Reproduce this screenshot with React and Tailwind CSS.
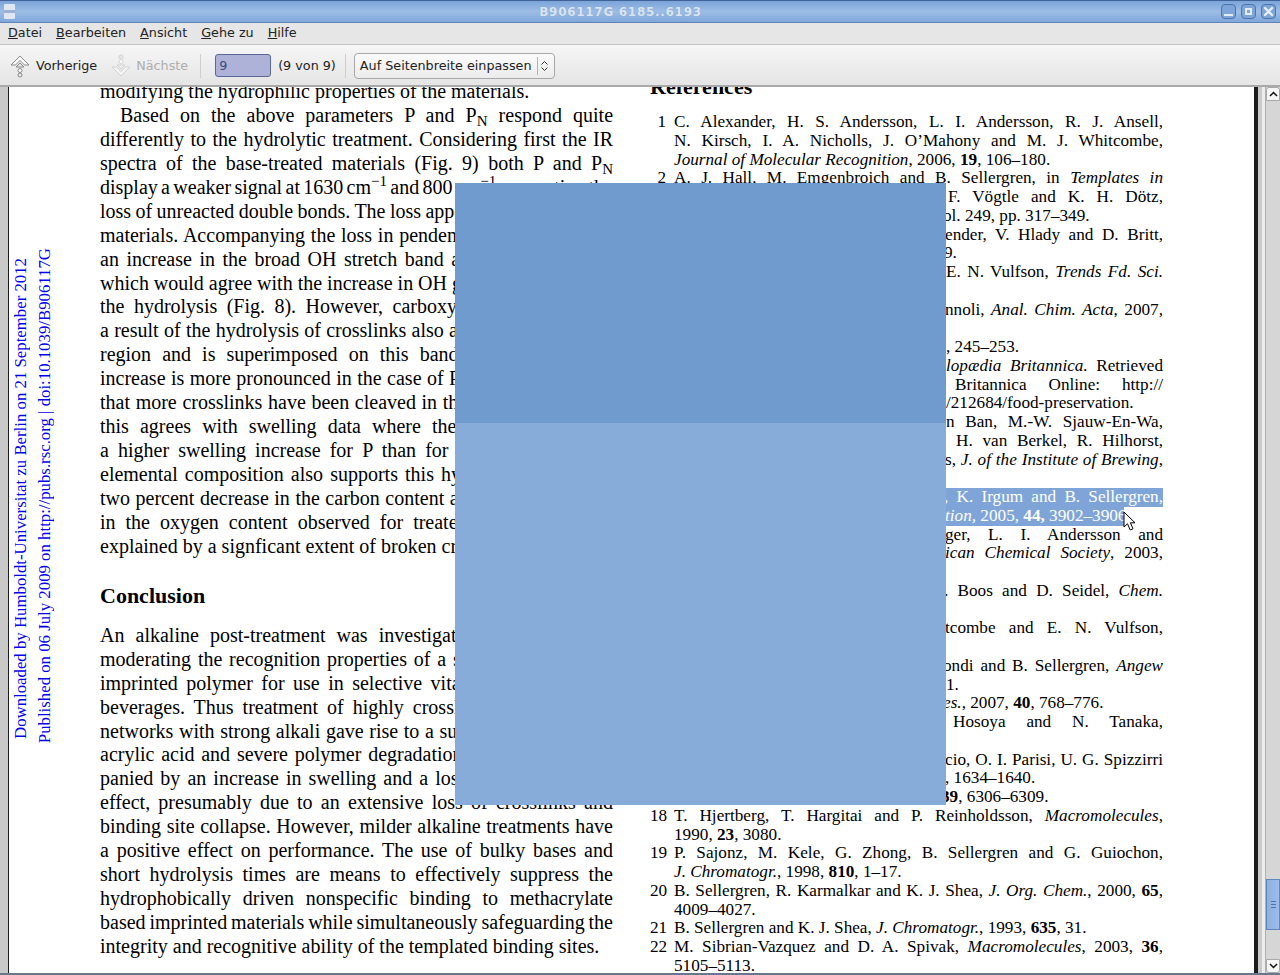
import React from 'react';

const leftTop = [
  { t: <>Based on the above parameters P and P<sub>N</sub> respond quite</>, indent: true },
  { t: 'differently to the hydrolytic treatment. Considering first the IR' },
  { t: <>spectra of the base-treated materials (Fig. 9) both P and P<sub>N</sub></> },
  { t: <>display a weaker signal at 1630 cm<sup>−1</sup> and 800 cm<sup>−1</sup> suggesting the</> },
  { t: 'loss of unreacted double bonds. The loss appears in both of these' },
  { t: 'materials. Accompanying the loss in pendent double bonds was' },
  { t: <>an increase in the broad OH stretch band at about 3500 cm<sup>−1</sup></> },
  { t: 'which would agree with the increase in OH groups as a result of' },
  { t: 'the hydrolysis (Fig. 8). However, carboxylic acid formed as' },
  { t: 'a result of the hydrolysis of crosslinks also absorbs within these' },
  { t: 'region and is superimposed on this band. The intensity of' },
  { t: <>increase is more pronounced in the case of P<sub>N</sub> which suggests a</> },
  { t: 'that more crosslinks have been cleaved in this material and that' },
  { t: 'this agrees with swelling data where the materials showed' },
  { t: <>a higher swelling increase for P than for P<sub>N</sub>. Data from the</> },
  { t: 'elemental composition also supports this hypothesis with their' },
  { t: 'two percent decrease in the carbon content and a corresponding' },
  { t: 'in the oxygen content observed for treated materials and is' },
  { t: 'explained by a signficant extent of broken crosslinks.', plain: true },
];

const leftBottom = [
  'An alkaline post-treatment was investigated as a means of',
  'moderating the recognition properties of a surface molecularly',
  'imprinted polymer for use in selective vitamin removal from',
  'beverages. Thus treatment of highly crosslinked polymer gel',
  'networks with strong alkali gave rise to a substantial amount of',
  'acrylic acid and severe polymer degradation. This was accom-',
  'panied by an increase in swelling and a loss of the imprinting',
  'effect, presumably due to an extensive loss of crosslinks and',
  'binding site collapse. However, milder alkaline treatments have',
  'a positive effect on performance. The use of bulky bases and',
  'short hydrolysis times are means to effectively suppress the',
  'hydrophobically driven nonspecific binding to methacrylate',
  'based imprinted materials while simultaneously safeguarding the',
];

// right column, one entry per printed line. pad = where the text comes out from behind the overlay
const refs = [
  { n: 1, t: 'C. Alexander, H. S. Andersson, L. I. Andersson, R. J. Ansell,' },
  { t: 'N. Kirsch, I. A. Nicholls, J. O’Mahony and M. J. Whitcombe,' },
  { t: <><i>Journal of Molecular Recognition</i>, 2006, <b>19</b>, 106–180.</>, plain: true },
  { n: 2, t: <>A. J. Hall, M. Emgenbroich and B. Sellergren, in <i>Templates in</i></> },
  { pad: 'pl-[274px]', t: 'F. Vögtle and K. H. Dötz,' },
  { pad: 'pl-[269px]', t: 'ol. 249, pp. 317–349.', plain: true },
  { pad: 'pl-[271px]', t: 'ender, V. Hlady and D. Britt,' },
  { pad: 'pl-[270px]', t: '9.', plain: true },
  { pad: 'pl-[272px]', t: <>E. N. Vulfson, <i>Trends Fd. Sci.</i></> },
  {},
  { pad: 'pl-[271px]', t: <>nnoli, <i>Anal. Chim. Acta</i>, 2007,</> },
  {},
  { pad: 'pl-[272px]', t: ', 245–253.', plain: true },
  { pad: 'pl-[272px]', t: <><i>lopædia Britannica.</i> Retrieved</> },
  { pad: 'pl-[281px]', t: 'Britannica Online: http://' },
  { pad: 'pl-[272px]', t: '/212684/food-preservation.', plain: true },
  { pad: 'pl-[272px]', t: 'n Ban, M.-W. Sjauw-En-Wa,' },
  { pad: 'pl-[282px]', t: 'H. van Berkel, R. Hilhorst,' },
  { pad: 'pl-[271px]', t: <>s, <i>J. of the Institute of Brewing</i>,</> },
  {},
  { pad: 'pl-[270px]', sel: true, t: ', K. Irgum and B. Sellergren,' },
  { pad: 'pl-[271px]', sel: true, plain: true, t: <><i>tion,</i> 2005, <b>44,</b> 3902–3906</> },
  { pad: 'pl-[271px]', t: 'ger, L. I. Andersson and' },
  { pad: 'pl-[271px]', t: <><i>ican Chemical Society</i>, 2003,</> },
  {},
  { pad: 'pl-[270px]', t: <>. Boos and D. Seidel, <i>Chem.</i></> },
  {},
  { pad: 'pl-[271px]', t: 'tcombe and E. N. Vulfson,' },
  {},
  { pad: 'pl-[269px]', t: <>ondi and B. Sellergren, <i>Angew</i></> },
  { pad: 'pl-[272px]', t: '1.', plain: true },
  { pad: 'pl-[269px]', t: <><i>es.</i>, 2007, <b>40</b>, 768–776.</>, plain: true },
  { pad: 'pl-[279px]', t: 'Hosoya and N. Tanaka,' },
  {},
  { pad: 'pl-[271px]', t: 'cio, O. I. Parisi, U. G. Spizzirri' },
  { pad: 'pl-[271px]', t: ', 1634–1640.', plain: true },
  { pad: 'pl-[267px]', t: <><b>39</b>, 6306–6309.</>, plain: true },
  { n: 18, t: <>T. Hjertberg, T. Hargitai and P. Reinholdsson, <i>Macromolecules</i>,</> },
  { t: <>1990, <b>23</b>, 3080.</>, plain: true },
  { n: 19, t: 'P. Sajonz, M. Kele, G. Zhong, B. Sellergren and G. Guiochon,' },
  { t: <><i>J. Chromatogr.</i>, 1998, <b>810</b>, 1–17.</>, plain: true },
  { n: 20, t: <>B. Sellergren, R. Karmalkar and K. J. Shea, <i>J. Org. Chem.</i>, 2000, <b>65</b>,</> },
  { t: '4009–4027.', plain: true },
  { n: 21, t: <>B. Sellergren and K. J. Shea, <i>J. Chromatogr.</i>, 1993, <b>635</b>, 31.</>, plain: true },
  { n: 22, t: <>M. Sibrian-Vazquez and D. A. Spivak, <i>Macromolecules</i>, 2003, <b>36</b>,</> },
  { t: '5105–5113.', plain: true },
];

function Line({ children, plain, indent }) {
  return (
    <div className={`h-[23.95px] leading-[23.95px] ${indent ? 'pl-[20px]' : ''} ${plain ? 'whitespace-nowrap' : 'text-justify [text-align-last:justify] [word-spacing:-2px]'}`}>
      {children}
    </div>
  );
}

function RefLine({ r }) {
  return (
    <div className="flex h-[18.76px] leading-[18.76px]">
      <div className="w-4 text-right shrink-0">{r.n}</div>
      <div className="ml-2 flex-1 min-w-0">
        <div className={`${r.pad || ''} ${r.plain ? 'whitespace-nowrap' : 'text-justify [text-align-last:justify]'} ${r.sel ? 'bg-[#7fa5d8] text-white' : ''} ${r.sel && r.plain ? 'w-[450px]' : ''}`}>
          {r.t || '\u00a0'}
        </div>
      </div>
    </div>
  );
}

function UpIcon({ dim }) {
  return (
    <svg width="22" height="24" viewBox="0 0 22 24" fill="none" stroke={dim ? '#d2d2d2' : '#8a8a8a'} strokeWidth="1" className={dim ? 'rotate-180' : ''}>
      <path d="M11 2 L20 11 L15.5 11 L11 6.5 L6.5 11 L2 11 Z" fill={dim ? '#f4f4f4' : '#f8f8f8'} />
      <path d="M11 9 L15 13 L7 13 Z" fill={dim ? '#eee' : '#e4e4e4'} />
      <circle cx="11" cy="16.5" r="2" fill="#fff" />
      <circle cx="11" cy="21" r="2" fill="#e8e8e8" />
    </svg>
  );
}

function WinButton({ children }) {
  return (
    <div className="w-[15px] h-[15px] rounded-[4px] border border-[#4a74ad] bg-[#7ea5d8] flex items-center justify-center">
      {children}
    </div>
  );
}

function Menu({ u, rest }) {
  return <span><span className="underline">{u}</span>{rest}</span>;
}

export default function App() {
  return (
    <div className="relative w-[1280px] h-[975px] overflow-hidden flex flex-col bg-[#e6e6e6] font-['DejaVu_Sans',sans-serif] text-[12.75px] text-[#222]">
      {/* title bar */}
      <div className="h-[23px] shrink-0 flex items-center border-t border-b border-t-[#3f6397] border-b-[#5f85b8] bg-gradient-to-b from-[#7ba4d9] via-[#9dbde6] to-[#7fa7da]">
        <div className="ml-[4px] w-[11px] h-[15px] bg-[#dfe7f2] rounded-[1px] flex flex-col justify-center">
          <div className="h-[3px] bg-[#9bb3d2]" />
        </div>
        <div className="flex-1 text-center pl-[5px] text-[12px] tracking-[0.7px] font-bold text-[#dbe5f1] leading-none [text-shadow:0_0_1px_#6f93c4]">
          B906117G 6185..6193
        </div>
        <div className="flex gap-[5px] mr-[4px]">
          <WinButton><div className="w-[9px] h-[2px] bg-[#e4ecf6] mt-[6px]" /></WinButton>
          <WinButton><div className="w-[7px] h-[7px] border-[2px] border-[#e4ecf6]" /></WinButton>
          <WinButton>
            <svg width="11" height="11" viewBox="0 0 11 11" stroke="#e8eff8" strokeWidth="2.4" strokeLinecap="round">
              <path d="M2 2 L9 9 M9 2 L2 9" />
            </svg>
          </WinButton>
        </div>
      </div>

      {/* menu bar */}
      <div className="h-[22px] shrink-0 flex items-center pl-[8px] gap-[14px] bg-[#e6e6e6] border-b border-[#c4c4c4] leading-none">
        <Menu u="D" rest="atei" />
        <Menu u="B" rest="earbeiten" />
        <Menu u="A" rest="nsicht" />
        <Menu u="G" rest="ehe zu" />
        <Menu u="H" rest="ilfe" />
      </div>

      {/* toolbar */}
      <div className="h-[42px] shrink-0 pt-px flex items-center bg-gradient-to-b from-[#f6f6f6] to-[#e5e5e5] border-b-2 border-[#a9a9a9]">
        <div className="ml-[9px] flex items-center w-[22px]"><UpIcon /></div>
        <span className="ml-[5px]">Vorherige</span>
        <div className="ml-[13px] flex items-center w-[22px]"><UpIcon dim /></div>
        <span className="ml-[4px] text-[#adadad]">Nächste</span>
        <div className="ml-[12px] w-px h-[24px] bg-[#cfcfcf]" />
        <div className="ml-[14px] w-[56px] h-[23px] rounded-[3px] border border-[#5a6896] bg-[#aeb2d8] pl-[3px] flex items-center text-[#3b4a78]">9</div>
        <span className="ml-[7px]">(9 von 9)</span>
        <div className="ml-[9px] w-px h-[24px] bg-[#cfcfcf]" />
        <div className="ml-[8px] w-[201px] h-[26px] rounded-[4px] border border-[#a8a8a8] bg-gradient-to-b from-[#fbfbfb] to-[#ececec] flex items-center pl-[5px]">
          <span className="whitespace-nowrap">Auf Seitenbreite einpassen</span>
          <div className="ml-[5px] w-px h-[18px] bg-[#b5b5b5]" />
          <svg width="9" height="12" viewBox="0 0 9 12" fill="none" stroke="#333" strokeWidth="1" className="ml-[2px]">
            <path d="M1.5 4.5 L4.5 1.5 L7.5 4.5 M1.5 7.5 L4.5 10.5 L7.5 7.5" />
          </svg>
        </div>
      </div>

      {/* document area */}
      <div className="flex-1 min-h-0 flex border-b-2 border-[#66788f]">
        <div className="w-2 bg-[#c9c9c9] shrink-0" />
        <div className="w-[1246px] shrink-0 bg-white border-l border-[#1c1c1c] flex overflow-hidden font-['Liberation_Serif',serif] text-black">
          {/* publisher stamp in the margin */}
          <div className="w-[91px] shrink-0 flex text-[16.8px] leading-[24px] text-[#0000ee]">
            <div className="mt-[171px] w-6 h-fit whitespace-nowrap [writing-mode:vertical-rl] rotate-180">
              Downloaded by Humboldt-Universitat zu Berlin on 21 September 2012
            </div>
            <div className="mt-[161px] w-6 h-fit whitespace-nowrap [writing-mode:vertical-rl] rotate-180">
              Published on 06 July 2009 on http://pubs.rsc.org | doi:10.1039/B906117G
            </div>
          </div>

          <div className="w-[513px] shrink-0 -mt-[7px] text-[20px]">
            <Line plain>modifying the hydrophilic properties of the materials.</Line>
            {leftTop.map((l, i) => (
              <Line key={i} plain={l.plain} indent={l.indent}>{l.t}</Line>
            ))}
            <h2 className="mt-[25px] mb-[16px] h-[24px] leading-[24px] text-[22px] font-bold">Conclusion</h2>
            {leftBottom.map((l, i) => <Line key={i}>{l}</Line>)}
            <Line plain>integrity and recognitive ability of the templated binding sites.</Line>
          </div>

          <div className="ml-[37px] w-[513px] shrink-0 -mt-[12px] text-[17.2px]">
            <h2 className="h-[24px] leading-[24px] text-[22px] font-bold">References</h2>
            <div className="mt-[14px]">
              {refs.map((r, i) => <RefLine key={i} r={r} />)}
            </div>
          </div>
        </div>
        <div className="w-[4px] bg-[#1c1c1c] shrink-0" />
        <div className="w-[4px] bg-[#c9c9c9] shrink-0" />
        <div className="w-[3px] bg-[#ececec] shrink-0" />

        {/* scrollbar */}
        <div className="w-[15px] shrink-0 bg-[#d6d6d6] flex flex-col border-l border-[#b0b0b0]">
          <div className="h-[14px] bg-[#f6f6f6] border border-[#a8a8a8] rounded-t-[3px] flex items-center justify-center">
            <svg width="9" height="6" viewBox="0 0 9 6" fill="none" stroke="#111" strokeWidth="1.5"><path d="M1 5 L4.5 1.5 L8 5" /></svg>
          </div>
          <div className="flex-1 flex flex-col">
            <div className="mt-[778px] h-[51px] bg-gradient-to-r from-[#8bb0e2] to-[#9dbde8] border border-[#5f86bd] flex flex-col items-center justify-center gap-[2px]">
              <div className="w-[5px] h-px bg-[#4f76ab]" />
              <div className="w-[5px] h-px bg-[#4f76ab]" />
              <div className="w-[5px] h-px bg-[#4f76ab]" />
            </div>
          </div>
          <div className="h-[14px] bg-[#f6f6f6] border border-[#a8a8a8] rounded-b-[3px] flex items-center justify-center">
            <svg width="9" height="6" viewBox="0 0 9 6" fill="none" stroke="#111" strokeWidth="1.5"><path d="M1 1 L4.5 4.5 L8 1" /></svg>
          </div>
        </div>
      </div>

      {/* blue window being dragged over the page */}
      <div className="absolute left-[455px] top-[183px] w-[491px] h-[622px] flex flex-col">
        <div className="h-[240px] bg-[#6f9bce]" />
        <div className="flex-1 bg-[#88acd9]" />
      </div>

      {/* mouse pointer */}
      <svg className="absolute left-[1123px] top-[511px]" width="14" height="21" viewBox="0 0 14 21">
        <path d="M1 1 L1 16 L4.5 12.8 L7.2 19 L10 17.8 L7.4 11.8 L12 11.8 Z" fill="#fff" stroke="#000" strokeWidth="1" strokeLinejoin="round" />
      </svg>
    </div>
  );
}
